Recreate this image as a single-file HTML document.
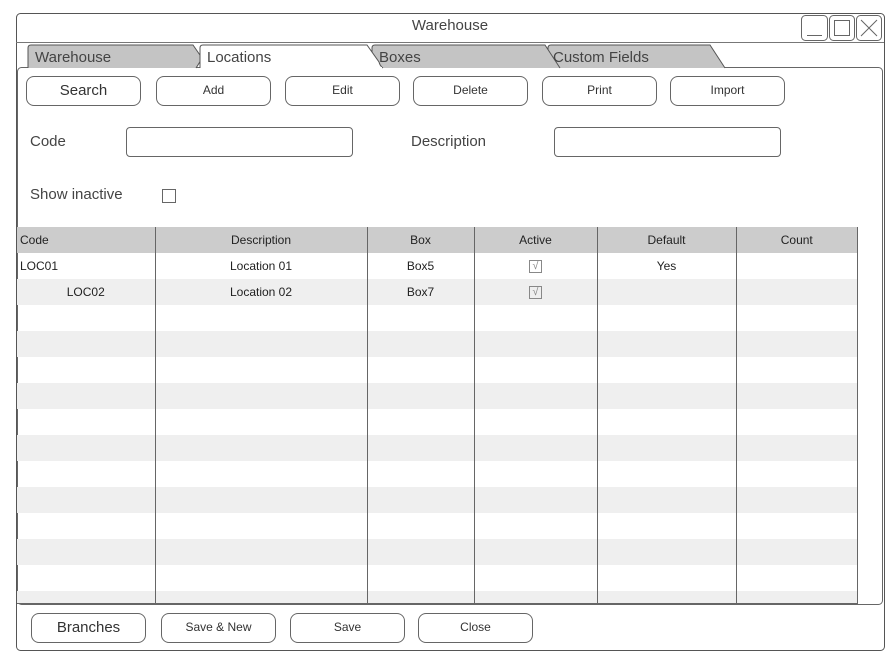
<!DOCTYPE html>
<html><head><style>
*{box-sizing:border-box;margin:0;padding:0}
body{width:892px;height:666px;background:#fff;font-family:"Liberation Sans",sans-serif;color:#333;position:relative;overflow:hidden}
.a{position:absolute}
.btn{position:absolute;border:1px solid #666;border-radius:8px;background:#fff;text-align:center;font-size:12px;line-height:27px;color:#333}
.big{font-size:15px}
.inp{position:absolute;border:1px solid #666;border-radius:4px;background:#fff;height:30px}
.lbl{position:absolute;font-size:15px;color:#444}
.wrap{position:absolute;left:17px;top:227px;width:841px;height:377px;overflow:hidden}
table{border-collapse:collapse;width:840px;font-size:12px;table-layout:fixed}
td,th{height:26px;border-left:1px solid #666;font-weight:normal;text-align:center;padding:0;color:#222}
th{background:#ccc;height:26px}
tr:nth-child(odd) td{background:#efefef}
td:first-child,th:first-child{border-left:none}
.cb{display:inline-block;width:13px;height:13px;border:1px solid #888;font-size:11px;line-height:11px;color:#888;vertical-align:middle}
.tab{position:absolute;top:49px;font-size:15px;color:#444}
</style></head><body>
<svg class="a" style="left:0;top:0" width="892" height="666">
<rect x="16.5" y="13.5" width="868" height="637" rx="4" fill="#fff" stroke="#555"/>
<line x1="16" y1="42.5" x2="884" y2="42.5" stroke="#777"/>
<rect x="801.5" y="15.5" width="26" height="25" rx="4" fill="#fff" stroke="#666"/>
<line x1="807" y1="35.5" x2="822" y2="35.5" stroke="#666"/>
<rect x="829.5" y="15.5" width="25" height="25" rx="4" fill="#fff" stroke="#666"/>
<rect x="834.5" y="20.5" width="15" height="15" fill="none" stroke="#666"/>
<rect x="856.5" y="15.5" width="25" height="25" rx="4" fill="#fff" stroke="#666"/>
<path d="M861 20 L877 36 M877 20 L861 36" stroke="#666"/>
<rect x="17.5" y="67.5" width="865" height="537" rx="4" fill="#fff" stroke="#666"/>
<path d="M548 68 L548 48 Q548 45 551 45 L710 45 L725 68" fill="#c4c4c4" stroke="#555"/>
<path d="M372 68 L372 48 Q372 45 375 45 L545 45 L560 68" fill="#c4c4c4" stroke="#555"/>
<path d="M28 68 L28 48 Q28 45 31 45 L193 45 L202 58 Q200 62 196 68" fill="#c4c4c4" stroke="#555"/>
<path d="M200 68 L200 48 Q200 45 203 45 L367 45 L379 62 Q380 66 383 68" fill="#fff" stroke="#555"/>
<line x1="201" y1="67.5" x2="382" y2="67.5" stroke="#fff" stroke-width="1"/>
</svg>
<div class="a" style="left:16px;top:17px;width:868px;text-align:center;font-size:15px;color:#444">Warehouse</div>
<div class="tab" style="left:35px">Warehouse</div>
<div class="tab" style="left:207px">Locations</div>
<div class="tab" style="left:379px">Boxes</div>
<div class="tab" style="left:553px">Custom Fields</div>
<div class="btn big" style="left:26px;top:76px;width:115px;height:30px">Search</div>
<div class="btn" style="left:156px;top:76px;width:115px;height:30px">Add</div>
<div class="btn" style="left:285px;top:76px;width:115px;height:30px">Edit</div>
<div class="btn" style="left:413px;top:76px;width:115px;height:30px">Delete</div>
<div class="btn" style="left:542px;top:76px;width:115px;height:30px">Print</div>
<div class="btn" style="left:670px;top:76px;width:115px;height:30px">Import</div>
<div class="lbl" style="left:30px;top:133px">Code</div>
<div class="inp" style="left:126px;top:127px;width:227px"></div>
<div class="lbl" style="left:411px;top:133px">Description</div>
<div class="inp" style="left:554px;top:127px;width:227px"></div>
<div class="lbl" style="left:30px;top:186px">Show inactive</div>
<div class="a" style="left:162px;top:189px;width:14px;height:14px;border:1px solid #666"></div>
<div class="wrap">
<table>
<colgroup><col style="width:138px"><col style="width:212px"><col style="width:107px"><col style="width:123px"><col style="width:139px"><col style="width:121px"></colgroup>
<tr><th style="text-align:left;padding-left:3px">Code</th><th>Description</th><th>Box</th><th>Active</th><th>Default</th><th>Count</th></tr>
<tr><td style="text-align:left;padding-left:3px">LOC01</td><td>Location 01</td><td>Box5</td><td><span class="cb">√</span></td><td>Yes</td><td></td></tr>
<tr><td>LOC02</td><td>Location 02</td><td>Box7</td><td><span class="cb">√</span></td><td></td><td></td></tr>
<tr><td></td><td></td><td></td><td></td><td></td><td></td></tr>
<tr><td></td><td></td><td></td><td></td><td></td><td></td></tr>
<tr><td></td><td></td><td></td><td></td><td></td><td></td></tr>
<tr><td></td><td></td><td></td><td></td><td></td><td></td></tr>
<tr><td></td><td></td><td></td><td></td><td></td><td></td></tr>
<tr><td></td><td></td><td></td><td></td><td></td><td></td></tr>
<tr><td></td><td></td><td></td><td></td><td></td><td></td></tr>
<tr><td></td><td></td><td></td><td></td><td></td><td></td></tr>
<tr><td></td><td></td><td></td><td></td><td></td><td></td></tr>
<tr><td></td><td></td><td></td><td></td><td></td><td></td></tr>
<tr><td></td><td></td><td></td><td></td><td></td><td></td></tr>
<tr><td></td><td></td><td></td><td></td><td></td><td></td></tr>
</table>
</div>
<div class="a" style="left:17px;top:603px;width:841px;border-top:1px solid #666"></div>
<div class="a" style="left:857px;top:227px;height:377px;border-left:1px solid #666"></div>
<div class="btn big" style="left:31px;top:613px;width:115px;height:30px">Branches</div>
<div class="btn" style="left:161px;top:613px;width:115px;height:30px">Save &amp; New</div>
<div class="btn" style="left:290px;top:613px;width:115px;height:30px">Save</div>
<div class="btn" style="left:418px;top:613px;width:115px;height:30px">Close</div>
</body></html>
